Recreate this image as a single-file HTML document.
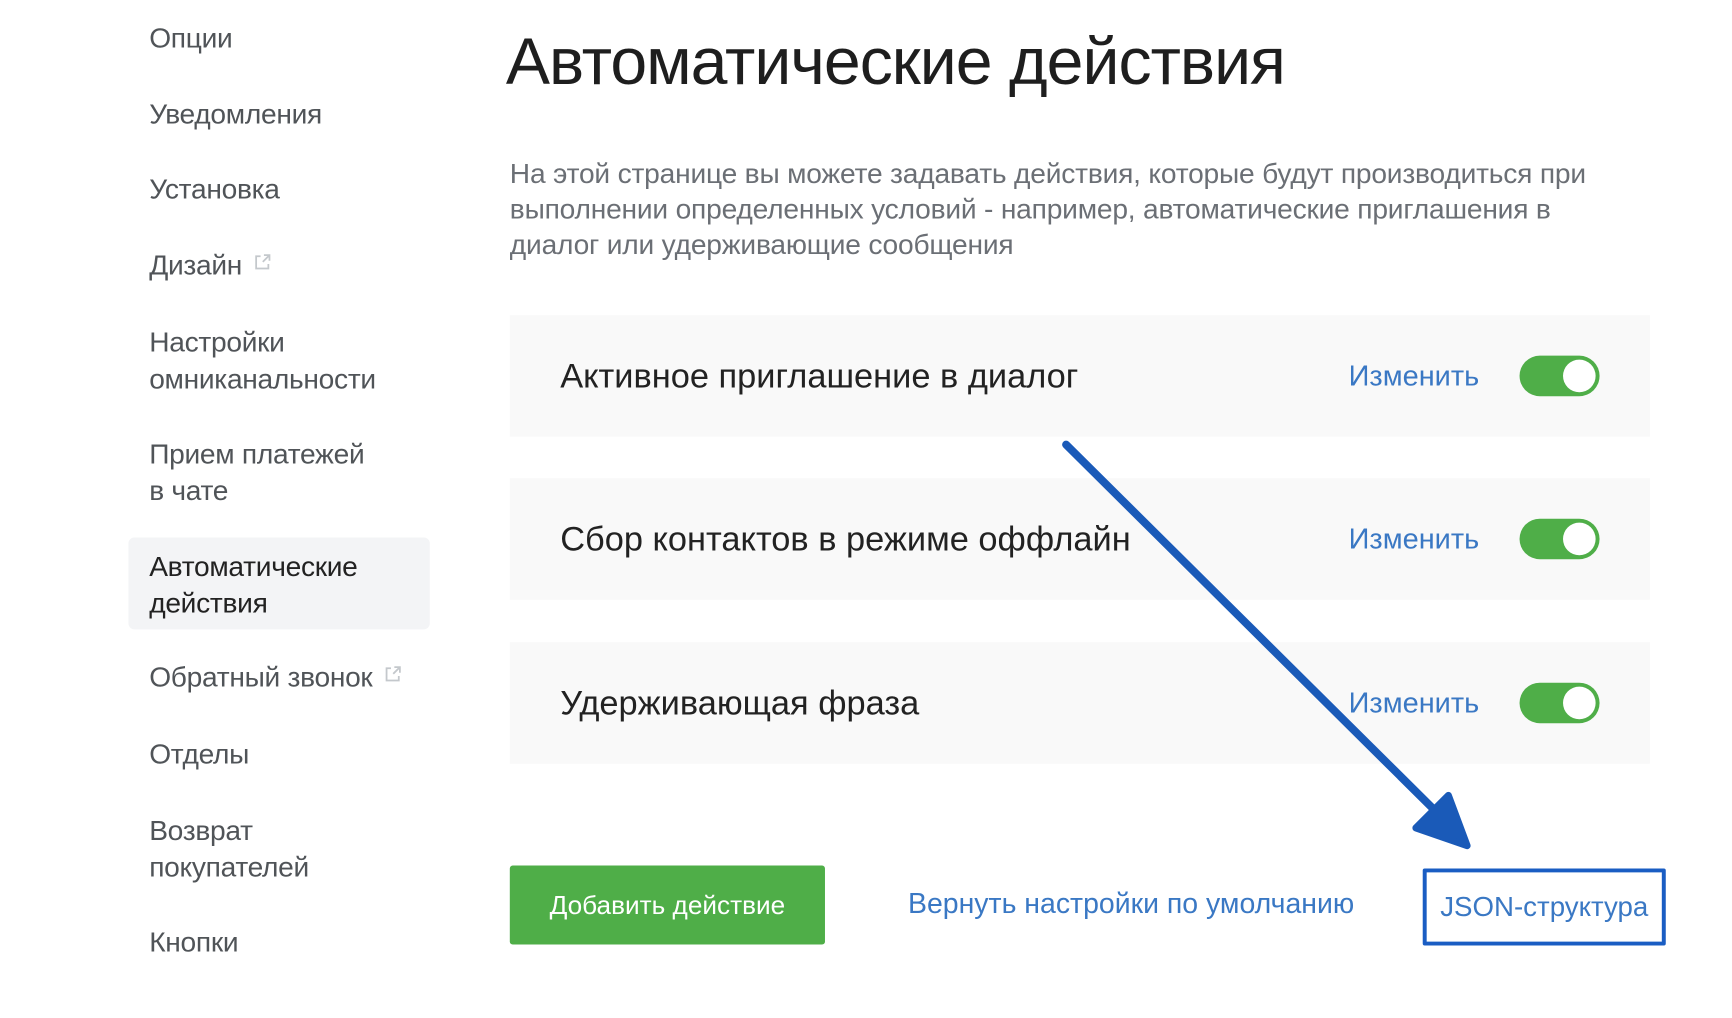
<!DOCTYPE html>
<html><head><meta charset="utf-8"><style>
*{margin:0;padding:0;box-sizing:border-box}
body{width:1732px;height:1010px;background:#fff;position:relative;overflow:hidden;font-family:"Liberation Sans","DejaVu Sans",sans-serif}
#w{position:absolute;left:0;top:0;width:1760px;height:1030px;transform:scale(0.988);transform-origin:0 0}
.a{position:absolute;white-space:nowrap}
.nav{left:151px;font-size:28.5px;color:#505458;line-height:37px;letter-spacing:-0.3px}
.act{position:absolute;left:130px;top:544px;width:305px;height:93px;background:#f3f4f6;border-radius:6px}
.card{position:absolute;left:516px;width:1154px;height:123px;background:#f9f9f9}
.ct{position:absolute;left:51px;top:0;line-height:123px;font-size:34.8px;color:#222}
.ed{position:absolute;left:849px;top:0;line-height:123px;font-size:29.3px;color:#3a78c4}
.tg{position:absolute;left:1022px;top:41px;width:81px;height:41px;border-radius:21px;background:#4fae48}
.tg:after{content:"";position:absolute;right:4px;top:4px;width:33px;height:33px;border-radius:50%;background:#fff}
.ext{display:inline-block;width:18px;height:18px;margin-left:12px;vertical-align:4px}
</style></head><body><div id="w">
<div class="act"></div>
<div class="a nav" style="top:21px">Опции</div>
<div class="a nav" style="top:98px">Уведомления</div>
<div class="a nav" style="top:174px">Установка</div>
<div class="a nav" style="top:251px">Дизайн<svg class="ext" viewBox="0 0 16 16"><path d="M6 3H2v11h11v-4M9 2h5v5M14 2L8 8" fill="none" stroke="#c4c8cc" stroke-width="1.6"/></svg></div>
<div class="a nav" style="top:329px">Настройки<br>омниканальности</div>
<div class="a nav" style="top:442px">Прием платежей<br>в чате</div>
<div class="a nav" style="top:556px;color:#222">Автоматические<br>действия</div>
<div class="a nav" style="top:668px">Обратный звонок<svg class="ext" viewBox="0 0 16 16"><path d="M6 3H2v11h11v-4M9 2h5v5M14 2L8 8" fill="none" stroke="#c4c8cc" stroke-width="1.6"/></svg></div>
<div class="a nav" style="top:746px">Отделы</div>
<div class="a nav" style="top:823px">Возврат<br>покупателей</div>
<div class="a nav" style="top:936px">Кнопки</div>

<div class="a" style="left:512px;top:24px;font-size:67px;color:#1e1e1e;letter-spacing:-1px">Автоматические действия</div>
<div class="a" style="left:516px;top:158px;font-size:28.5px;line-height:36px;color:#6b6f75;letter-spacing:-0.2px">На этой странице вы можете задавать действия, которые будут производиться при<br>выполнении определенных условий - например, автоматические приглашения в<br>диалог или удерживающие сообщения</div>

<div class="card" style="top:319px"><div class="ct">Активное приглашение в диалог</div><div class="ed">Изменить</div><div class="tg"></div></div>
<div class="card" style="top:484px"><div class="ct">Сбор контактов в режиме оффлайн</div><div class="ed">Изменить</div><div class="tg"></div></div>
<div class="card" style="top:650px"><div class="ct">Удерживающая фраза</div><div class="ed">Изменить</div><div class="tg"></div></div>

<div class="a" style="left:516px;top:876px;width:319px;height:80px;background:#4fae48;border-radius:3px;color:#fff;font-size:26.5px;line-height:80px;text-align:center">Добавить действие</div>
<div class="a" style="left:919px;top:899px;font-size:28.8px;color:#3a78c4">Вернуть настройки по умолчанию</div>
<div class="a" style="left:1440px;top:879px;width:246px;height:78px;border:4px solid #1a5dc3;border-radius:2px;font-size:28px;color:#3a78c4;line-height:70px;text-align:center">JSON-структура</div>

<svg class="a" style="left:0;top:0" width="1760" height="1030" viewBox="0 0 1760 1030">
<line x1="1079" y1="450" x2="1450" y2="818" stroke="#1a5ab8" stroke-width="8" stroke-linecap="round"/>
<path d="M1485 856 L1433 838 L1466 805 Z" fill="#1a5ab8" stroke="#1a5ab8" stroke-width="7" stroke-linejoin="round"/>
</svg>
</div></body></html>
